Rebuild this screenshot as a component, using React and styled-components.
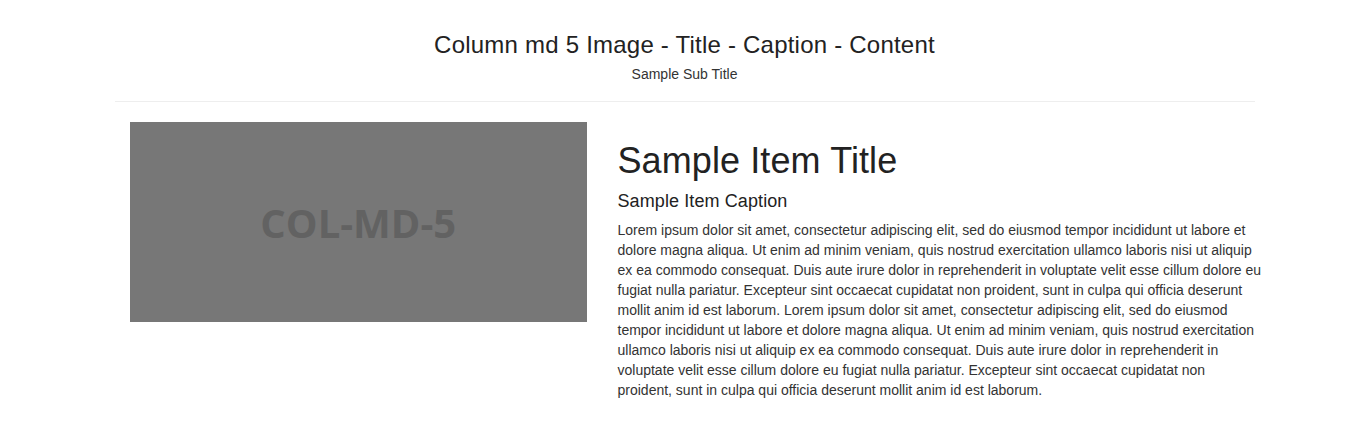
import React from 'react';
import styled, { createGlobalStyle } from 'styled-components';

const GlobalStyle = createGlobalStyle`
  * {
    box-sizing: border-box;
  }
  body {
    margin: 0;
    background: #fff;
    font-family: "Liberation Sans", Arial, sans-serif;
    font-size: 14px;
    line-height: 1.42857;
    color: #333;
  }
`;

const Container = styled.div`
  width: 1170px;
  margin: 0 auto;
  padding: 0 15px;
`;

const Header = styled.header`
  text-align: center;
  padding-top: 32px;
`;

const HeaderTitle = styled.h2`
  margin: 0;
  font-size: 24px;
  font-weight: 400;
  line-height: 26px;
  letter-spacing: 0.22px;
  color: #222;
`;

const HeaderSub = styled.div`
  margin-top: 6px;
  font-size: 14px;
  line-height: 20px;
  color: #333;
`;

const Divider = styled.hr`
  margin: 17px 0 20px;
  border: 0;
  border-top: 1px solid #eee;
`;

const Row = styled.div`
  display: grid;
  grid-template-columns: 487.5px 1fr;
  margin-right: -7px;
`;

const ImageCol = styled.div`
  padding: 0 15px;
`;

const Placeholder = styled.div`
  height: 200px;
  background: #777;
  display: flex;
  align-items: center;
  justify-content: center;
  font-family: "Open Sans", sans-serif;
  font-weight: 700;
  font-size: 40px;
  color: #626262;
  padding-top: 2px;
`;

const TextCol = styled.div`
  padding-left: 15.5px;
`;

const ItemTitle = styled.h1`
  margin: 19px 0 10px;
  font-size: 36px;
  font-weight: 400;
  line-height: 40px;
  letter-spacing: 0.1px;
  color: #222;
`;

const ItemCaption = styled.h4`
  margin: 0 0 9px;
  font-size: 18px;
  font-weight: 400;
  line-height: 20px;
  letter-spacing: 0.1px;
  color: #222;
`;

const ItemText = styled.p`
  margin: 0;
  font-size: 14px;
  line-height: 20px;
  color: #333;
`;

const lorem =
  'Lorem ipsum dolor sit amet, consectetur adipiscing elit, sed do eiusmod tempor incididunt ut labore et dolore magna aliqua. Ut enim ad minim veniam, quis nostrud exercitation ullamco laboris nisi ut aliquip ex ea commodo consequat. Duis aute irure dolor in reprehenderit in voluptate velit esse cillum dolore eu fugiat nulla pariatur. Excepteur sint occaecat cupidatat non proident, sunt in culpa qui officia deserunt mollit anim id est laborum.';

const App = () => (
  <>
    <GlobalStyle />
    <Container>
      <Header>
        <HeaderTitle>Column md 5 Image - Title - Caption - Content</HeaderTitle>
        <HeaderSub>Sample Sub Title</HeaderSub>
      </Header>
      <Divider />
      <Row>
        <ImageCol>
          <Placeholder>COL-MD-5</Placeholder>
        </ImageCol>
        <TextCol>
          <ItemTitle>Sample Item Title</ItemTitle>
          <ItemCaption>Sample Item Caption</ItemCaption>
          <ItemText>
            {lorem} {lorem}
          </ItemText>
        </TextCol>
      </Row>
    </Container>
  </>
);

export default App;
